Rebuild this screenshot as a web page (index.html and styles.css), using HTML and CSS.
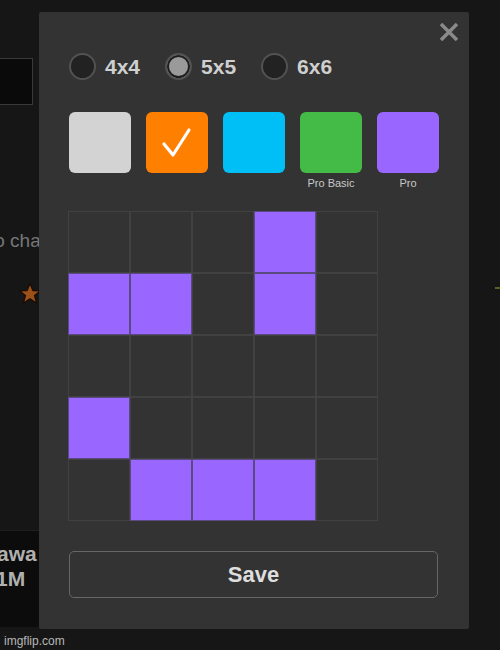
FILE: index.html
```html
<!DOCTYPE html>
<html lang="en">
<head>
    <meta charset="UTF-8">
    <meta name="viewport" content="width=device-width, initial-scale=1.0">
    <title>Pixel Icon Editor</title>
    <link rel="stylesheet" href="styles.css">
</head>
<body>
    <div class="backdrop">
        <div class="side">
            <div class="side-input"></div>
            <p class="side-hint">to change the colors</p>
            <div class="side-star">
                <svg width="24" height="23" viewBox="0 0 20 19">
                    <path d="M10 1 L12.4 7 L18.8 7.2 L13.8 11.2 L15.6 17.6 L10 14 L4.4 17.6 L6.2 11.2 L1.2 7.2 L7.6 7 Z" fill="#9c5019" stroke="#1a0d05" stroke-width="1.1" stroke-linejoin="round"/>
                </svg>
            </div>
            <div class="side-card">
                <div class="side-name">awa</div>
                <div class="side-count">1M</div>
            </div>
        </div>
        <div class="far-mark"></div>
        <div class="watermark">imgflip.com</div>
    </div>

    <div class="modal">
        <button class="close" aria-label="Close">
            <svg width="20" height="20" viewBox="0 0 20 20">
                <path d="M2 2 L18 18 M18 2 L2 18" stroke="#8a8a8a" stroke-width="3.5" stroke-linecap="butt"/>
            </svg>
        </button>

        <div class="sizes">
            <label class="size"><span class="radio"></span>4x4</label>
            <label class="size"><span class="radio checked"></span>5x5</label>
            <label class="size"><span class="radio"></span>6x6</label>
        </div>

        <div class="swatches">
            <div class="swatch-col"><div class="swatch gray"></div></div>
            <div class="swatch-col">
                <div class="swatch orange">
                    <svg width="62" height="61" viewBox="0 0 62 61">
                        <path d="M18 32 L27 43 L43 18" fill="none" stroke="#fff" stroke-width="3.2" stroke-linecap="round" stroke-linejoin="round"/>
                    </svg>
                </div>
            </div>
            <div class="swatch-col"><div class="swatch blue"></div></div>
            <div class="swatch-col"><div class="swatch green"></div><span class="swatch-label">Pro Basic</span></div>
            <div class="swatch-col"><div class="swatch purple"></div><span class="swatch-label">Pro</span></div>
        </div>

        <div class="grid" id="grid"></div>

        <button class="save">Save</button>
    </div>

    <script>
        // 5x5 pattern, 1 = painted
        const pattern = [
            [0, 0, 0, 1, 0],
            [1, 1, 0, 1, 0],
            [0, 0, 0, 0, 0],
            [1, 0, 0, 0, 0],
            [0, 1, 1, 1, 0]
        ];
        const grid = document.getElementById('grid');
        pattern.forEach(row => {
            row.forEach(v => {
                const cell = document.createElement('div');
                cell.className = v ? 'cell on' : 'cell';
                grid.appendChild(cell);
            });
        });
    </script>
</body>
</html>
```

FILE: styles.css
```css
body {
    margin: 0;
    background-color: #161616;
    font-family: "Liberation Sans", Arial, sans-serif;
    width: 500px;
    height: 650px;
    overflow: hidden;
    position: relative;
}
.backdrop {
    height: 650px;
    position: relative;
}
.side {
    width: 60px;
    padding-top: 58px;
}
.side-input {
    width: 33px;
    height: 47px;
    background-color: #0a0a0a;
    border: 1px solid #3a3a3a;
    border-left: none;
    box-sizing: border-box;
}
.side-hint {
    margin: 125px 0 0 -11px;
    font-size: 19px;
    color: #777;
    white-space: nowrap;
    line-height: 22px;
}
.side-star {
    margin: 30px 0 0 18px;
    width: 24px;
    height: 23px;
}
.side-star svg {
    display: block;
}
.side-card {
    margin-top: 225px;
    width: 39px;
    height: 97px;
    background-color: #0c0c0c;
    border-top: 1px solid #1f1f1f;
    padding-top: 10px;
    box-sizing: border-box;
}
.side-name, .side-count {
    font-size: 21px;
    font-weight: bold;
    color: #b0b0b0;
    line-height: 25px;
    white-space: nowrap;
}
.side-name {
    margin-left: -3px;
}
.side-count {
    margin-left: -4px;
}
.far-mark {
    position: absolute;
    left: 495px;
    top: 287px;
    width: 5px;
    height: 2px;
    background-color: #5f5d22;
}
.watermark {
    position: absolute;
    left: 4px;
    top: 634px;
    font-size: 12px;
    color: #b8b8b8;
}

.modal {
    position: absolute;
    left: 39px;
    top: 12px;
    width: 430px;
    height: 617px;
    box-sizing: border-box;
    background-color: #333;
    border-radius: 2px;
    padding: 41px 31px 0 30px;
}
.close {
    position: absolute;
    right: 10px;
    top: 10px;
    background: none;
    border: none;
    padding: 0;
    width: 20px;
    height: 20px;
    cursor: pointer;
}
.sizes {
    display: flex;
    align-items: center;
    gap: 25px;
    height: 27px;
}
.size {
    display: flex;
    align-items: center;
    gap: 9px;
    font-size: 21px;
    font-weight: bold;
    color: #cfcfcf;
}
.radio {
    width: 27px;
    height: 27px;
    border-radius: 50%;
    border: 2px solid #525252;
    background-color: #222;
    box-sizing: border-box;
}
.radio.checked {
    background-color: #9a9a9a;
    box-shadow: inset 0 0 0 2px #1e1e1e;
}
.swatches {
    display: flex;
    gap: 15px;
    margin-top: 32px;
    height: 99px;
}
.swatch-col {
    display: flex;
    flex-direction: column;
    align-items: center;
    width: 62px;
}
.swatch {
    width: 62px;
    height: 61px;
    border-radius: 6px;
}
.swatch svg {
    display: block;
}
.gray { background-color: #d3d3d3; }
.orange { background-color: #ff7f00; }
.blue { background-color: #00bff7; }
.green { background-color: #44bb46; }
.purple { background-color: #9966ff; }
.swatch-label {
    font-size: 11px;
    color: #c8c8c8;
    margin-top: 4px;
}
.grid {
    display: grid;
    grid-template-columns: repeat(5, 62px);
    grid-template-rows: repeat(5, 62px);
    width: 310px;
    margin-left: -1px;
}
.cell {
    border: 1px solid #414141;
    box-sizing: border-box;
}
.cell.on {
    background-color: #9966ff;
    border-color: #5b4a80;
}
.save {
    display: block;
    width: 369px;
    height: 47px;
    margin-top: 30px;
    background-color: #333;
    border: 1.5px solid #666;
    border-radius: 5px;
    color: #dedede;
    font-family: "Liberation Sans", Arial, sans-serif;
    font-size: 22px;
    font-weight: bold;
    cursor: pointer;
}
```
